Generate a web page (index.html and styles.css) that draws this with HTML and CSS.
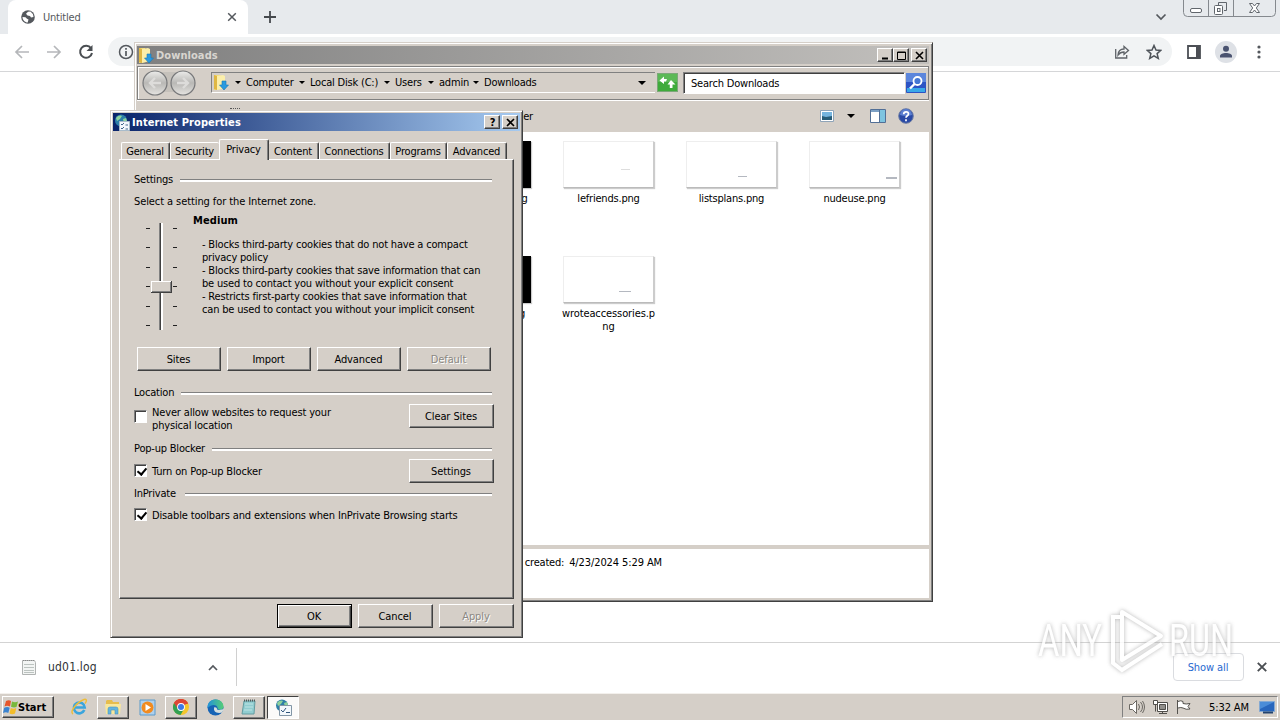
FILE: index.html
```html
<!DOCTYPE html>
<html lang="en">
<head>
    <meta charset="UTF-8">
    <title>Untitled</title>
    <link rel="stylesheet" href="styles.css">
</head>
<body>
    <div class="browser">
        <div class="tab-strip">
            <div class="browser-tab">
                <svg class="tab-globe" width="14" height="14" viewBox="0 0 14 14"><circle cx="7" cy="7" r="6.800" fill="#54585d"/><path d="M1.500 7l3 .3 1.500 1.500 1.500.7-.8 3C4 12.500 1.500 10 1.500 7zM7 1.800l2.500-.2 2.500 2.700.5 2.700-2.500.5-1-1.500-2.500-.5L5 3.700z" fill="#fff"/></svg>
                <span class="tab-title">Untitled</span>
                <svg width="10" height="10" viewBox="0 0 10 10"><path d="M1.200 1.200l7.600 7.600M8.800 1.200L1.200 8.800" stroke="#54585d" stroke-width="1.500"/></svg>
            </div>
            <svg class="new-tab" width="14" height="14" viewBox="0 0 14 14"><path d="M7 1v12M1 7h12" stroke="#45494d" stroke-width="1.800"/></svg>
            <svg class="tab-search" width="12" height="8" viewBox="0 0 12 8"><path d="M1.500 1.500L6 6l4.500-4.500" fill="none" stroke="#54585d" stroke-width="1.700"/></svg>
            <div class="caption-buttons">
                <svg width="93" height="17" viewBox="0 0 93 17" fill="none" stroke="#61666c"><path d="M.5 0v12.500q0 4 4 4h84q4 0 4-4V0M25.500 0v16M50.500 0v16" stroke="#85898e"/><rect x="7.500" y="8.500" width="11" height="4" rx="1.500" fill="#fff"/><path d="M35.500 5V2.500h8v8H41" /><rect x="31.500" y="5.500" width="8" height="9" rx="1" fill="#fff"/><rect x="34.500" y="8.500" width="2.500" height="3"/><path d="M66.500 3.500h3l2 2.500 2-2.500h3l-3.200 4.500 3.200 4.500h-3l-2-2.500-2 2.500h-3L69.700 8z" fill="#fff"/></svg>
            </div>
        </div>
        <div class="toolbar">
            <svg width="16" height="14" viewBox="0 0 16 14" fill="none" stroke="#b5b7ba" stroke-width="1.700"><path d="M15 7H2M8 1L2 7l6 6"/></svg>
            <svg width="16" height="14" viewBox="0 0 16 14" fill="none" stroke="#b5b7ba" stroke-width="1.700"><path d="M1 7h13M8 1l6 6-6 6"/></svg>
            <svg width="16" height="16" viewBox="0 0 16 16"><path d="M13 4.200A6 6 0 1 0 14 9" fill="none" stroke="#4a4e52" stroke-width="2"/><path d="M14.500 1v6h-6z" fill="#4a4e52"/></svg>
            <div class="omnibox">
                <svg width="16" height="16" viewBox="0 0 16 16"><circle cx="8" cy="8" r="6.500" fill="none" stroke="#54585d" stroke-width="1.500"/><path d="M8 7v5M8 4v1.700" stroke="#54585d" stroke-width="1.700"/></svg>
                <span class="grow"></span>
                <svg width="16" height="16" viewBox="0 0 16 16" fill="none" stroke="#5f6368" stroke-width="1.300"><path d="M1.700 5v9h11v-3"/><path d="M4 11c.3-4 2.500-6 6-6V2.500l4.500 4L10 10.300V8C7.500 8 5.500 9 4 11z"/></svg>
                <svg width="16" height="16" viewBox="0 0 16 16"><path d="M8 1.500l2 4.500 4.800.4-3.700 3.200 1.200 4.800L8 11.900l-4.300 2.500 1.200-4.800L1.200 6.400 6 6z" fill="none" stroke="#4e5359" stroke-width="1.500"/></svg>
            </div>
            <svg class="side-panel" width="14" height="14" viewBox="0 0 14 14"><path d="M1 1h12v12H1z" fill="#fff" stroke="#4c4f55" stroke-width="1.800"/><path d="M9 1h4v12H9z" fill="#4c4f55"/></svg>
            <svg class="profile" width="22" height="22" viewBox="0 0 22 22"><circle cx="11" cy="11" r="11" fill="#dee1e6"/><circle cx="11" cy="7.800" r="3" fill="#4a5370"/><path d="M5 16.500v-1.500c0-2 3-3 6-3s6 1 6 3v1.500z" fill="#4a5370"/></svg>
            <svg class="menu-dots" width="4" height="14" viewBox="0 0 4 14" fill="#54585d"><circle cx="2" cy="2" r="1.600"/><circle cx="2" cy="7" r="1.600"/><circle cx="2" cy="12" r="1.600"/></svg>
        </div>
        <div class="page"></div>
        <div class="shelf">
            <div class="download">
                <svg width="14" height="17" viewBox="0 0 14 17"><path d="M.5 1.500h12l1 2v12H.5z" fill="#f3f5f4" stroke="#b0b3b2"/><path d="M2 5.500h10M2 8.500h10M2 11.500h10M2 13.500h10" stroke="#bcc3c0"/><path d="M1 1.500h12" stroke="#888" stroke-dasharray="1 1"/></svg>
                <span class="download-name">ud01.log</span>
                <svg width="10" height="7" viewBox="0 0 10 7"><path d="M1 6l4-4 4 4" fill="none" stroke="#54585d" stroke-width="1.700"/></svg>
            </div>
            <button class="show-all">Show all</button>
            <svg width="10" height="10" viewBox="0 0 10 10"><path d="M.8.8l8.400 8.400M9.200.8L.8 9.200" stroke="#4a4e52" stroke-width="1.900"/></svg>
        </div>
    </div>

    <!-- Explorer -->
    <div class="window explorer">
        <div class="title-bar inactive">
            <svg width="16" height="17" viewBox="0 0 16 17"><path d="M1 1h6l1 2v12l-7 1z" fill="#f5dc78"/><path d="M4 2l6-1 2 1v12l-8 2z" fill="#fbeeaa"/><path d="M1 1l3 1v14l-3-1z" fill="#dfb743"/><path d="M9 7h4v4h2.500L11 16l-4.500-5H9z" fill="#2a9ae0" stroke="#1678b8" stroke-width=".6"/></svg>
            <span class="title">Downloads</span>
            <div class="win-btn"><svg width="10" height="9" viewBox="0 0 10 9"><path d="M1 7.500h6" stroke="#000" stroke-width="2"/></svg></div>
            <div class="win-btn"><svg width="10" height="9" viewBox="0 0 10 9"><path d="M.5 1h8v7.500h-8zM.5 1.500h8" fill="none" stroke="#000"/></svg></div>
            <div class="win-btn close"><svg width="10" height="9" viewBox="0 0 10 9"><path d="M1 1l7 7M8 1L1 8" stroke="#000" stroke-width="1.600"/></svg></div>
        </div>
        <div class="address-row">
            <svg class="nav-buttons" width="56" height="28" viewBox="0 0 56 28">
                <defs><linearGradient id="nav" x1="0" y1="0" x2="0" y2="1"><stop offset="0" stop-color="#ececea"/><stop offset=".5" stop-color="#b9b8b5"/><stop offset="1" stop-color="#e5e4e1"/></linearGradient></defs>
                <path d="M14 3h28v20H14z" fill="#c5c1bb"/>
                <circle cx="14" cy="14" r="12" fill="url(#nav)" stroke="#77787a" stroke-width="1.200"/><circle cx="42" cy="14" r="12" fill="url(#nav)" stroke="#77787a" stroke-width="1.200"/>
                <path d="M20 14H9M14 9l-5 5 5 5M36 14h11M42 9l5 5-5 5" fill="none" stroke="#dddcda" stroke-width="2.400"/>
            </svg>
            <div class="breadcrumbs">
                <svg class="folder" width="16" height="17" viewBox="0 0 16 17"><path d="M1 1h6l1 2v12l-7 1z" fill="#f5dc78"/><path d="M4 2l6-1 2 1v12l-8 2z" fill="#fbeeaa"/><path d="M1 1l3 1v14l-3-1z" fill="#dfb743"/><path d="M9 7h4v4h2.500L11 16l-4.500-5H9z" fill="#2a9ae0" stroke="#1678b8" stroke-width=".6"/></svg>
                <i class="arrow"></i><span class="crumb computer">Computer</span>
                <i class="arrow"></i><span class="crumb disk">Local Disk (C:)</span>
                <i class="arrow"></i><span class="crumb users">Users</span>
                <i class="arrow"></i><span class="crumb admin">admin</span>
                <i class="arrow"></i><span class="crumb">Downloads</span>
                <span class="grow"></span>
                <i class="arrow big"></i>
            </div>
            <svg class="refresh" width="21" height="19" viewBox="0 0 21 19"><rect x=".5" y=".5" width="20" height="18" fill="#3fab3b" stroke="#7ba878"/><path d="M1 1h19v8H1z" fill="#5cb956"/><path d="M2.500 7.500L7 3.500V6h3l-1 2.500H7V11zM18.500 11.500L14 7l-3.500 4.500h2.300V15h2.700v-3.500z" fill="#fff"/></svg>
            <div class="search">Search Downloads</div>
            <svg class="search-go" width="20" height="20" viewBox="0 0 20 20"><rect width="20" height="20" rx="1" fill="#2c53c4"/><path d="M0 0h20v9H0z" fill="#5c86dc"/><path d="M1 19v-4h18v4z" fill="#39a8e8"/><circle cx="11.500" cy="8" r="4" fill="#4577d4" stroke="#fff" stroke-width="1.800"/><path d="M8.500 11L4 15.500" stroke="#fff" stroke-width="2.400"/></svg>
        </div>
        <div class="command-bar">
            <span class="hidden-edge"></span>
            <span class="new-folder">New folder</span>
            <span class="grow"></span>
            <svg width="14" height="12" viewBox="0 0 14 12"><path d="M.5.500h13v11H.5z" fill="#fff" stroke="#8fa4b8"/><path d="M2 2h10v8H2z" fill="#76b5df"/><path d="M2 6l4 1 6-1v4H2z" fill="#285d78"/></svg>
            <i class="arrow big view-arrow"></i>
            <svg class="preview" width="16" height="14" viewBox="0 0 16 14"><path d="M.5.500h15v13H.5z" fill="#fff" stroke="#526f96"/><path d="M1 2h9" stroke="#7ca0c4" stroke-width="2"/><path d="M10 1h5v12h-5z" fill="#7ec4e0"/><path d="M9.500 1v12" stroke="#526f96"/></svg>
            <svg width="16" height="16" viewBox="0 0 16 16"><circle cx="8" cy="8" r="7.300" fill="#2949a5" stroke="#6d7da4"/><path d="M2 7a6 6 0 0 1 12 0q-6 2-12 0z" fill="#5c7fd0"/><path d="M5.700 6.300c0-3.300 4.800-3 4.800-.3C10.500 7.800 8 7.800 8 9.800M8 11.200v2" fill="none" stroke="#fff" stroke-width="1.700"/></svg>
        </div>
        <div class="files">
            <div class="file"><div class="thumb dark"></div><span class="tail">.png</span></div>
            <div class="file"><div class="thumb"><i class="speck one"></i></div><span>lefriends.png</span></div>
            <div class="file"><div class="thumb"><i class="speck two"></i></div><span>listsplans.png</span></div>
            <div class="file"><div class="thumb"><i class="speck three"></i></div><span>nudeuse.png</span></div>
            <div class="file"><div class="thumb dark"></div><span class="tail short">.png</span></div>
            <div class="file"><div class="thumb"><i class="speck four"></i></div><span class="wide">wroteaccessories.p<br>ng</span></div>
        </div>
        <div class="details">Date created: <span class="date">4/23/2024 5:29 AM</span></div>
    </div>

    <!-- Internet Properties -->
    <div class="window dialog">
        <div class="title-bar active">
            <svg width="17" height="17" viewBox="0 0 17 17"><circle cx="7" cy="6.500" r="6" fill="#2e7fa8"/><path d="M2 4c2-3 5-3 6-2L6 5 3 7zM9 5l3-1 1 3-3 3z" fill="#8ed29b"/><path d="M5.500 7.500h10v9h-10z" fill="#f3f8fc" stroke="#a9bccb"/><path d="M7 10l1 1 2-2M7 14l1 1 2-2M11.500 11H14M11.500 15H14" fill="none" stroke="#42688c"/></svg>
            <span class="title">Internet Properties</span>
            <div class="win-btn help">?</div>
            <div class="win-btn close"><svg width="10" height="9" viewBox="0 0 10 9"><path d="M1 1l7 7M8 1L1 8" stroke="#000" stroke-width="1.600"/></svg></div>
        </div>
        <div class="tabs">
            <div class="tab general">General</div>
            <div class="tab security">Security</div>
            <div class="tab privacy">Privacy</div>
            <div class="tab content">Content</div>
            <div class="tab connections">Connections</div>
            <div class="tab programs">Programs</div>
            <div class="tab advanced">Advanced</div>
        </div>
        <div class="panel">
            <div class="group">Settings</div>
            <p class="intro">Select a setting for the Internet zone.</p>
            <div class="zone">
                <svg class="slider" width="33" height="110" viewBox="0 0 33 110" shape-rendering="crispEdges">
                    <path d="M1 7.500h4M1 26.500h4M1 46.500h4M1 65.500h4M1 85.500h4M1 104.500h4M28 7.500h4M28 26.500h4M28 46.500h4M28 65.500h4M28 85.500h4M28 104.500h4" stroke="#222"/>
                    <path d="M14 2h1v107h-1z" fill="#808080"/><path d="M15 2h1v107h-1z" fill="#404040"/><path d="M16 2h2v107h-2z" fill="#fff"/>
                    <path d="M6 60h21v12H6z" fill="#404040"/><path d="M6 60h20v11H6z" fill="#fff"/><path d="M7 61h19v10H7z" fill="#808080"/><path d="M7 61h18v9H7z" fill="#d5cfc8"/>
                </svg>
                <div class="level">
                    <strong>Medium</strong>
                    <p>- Blocks third-party cookies that do not have a compact<br>privacy policy<br>
                    - Blocks third-party cookies that save information that can<br>be used to contact you without your explicit consent<br>
                    - Restricts first-party cookies that save information that<br>can be used to contact you without your implicit consent</p>
                </div>
            </div>
            <div class="zone-buttons">
                <button>Sites</button>
                <button>Import</button>
                <button>Advanced</button>
                <button disabled>Default</button>
            </div>
            <div class="group">Location</div>
            <div class="option location">
                <span class="check"></span>
                <label>Never allow websites to request your<br>physical location</label>
                <button>Clear Sites</button>
            </div>
            <div class="group popup">Pop-up Blocker</div>
            <div class="option">
                <span class="check on"></span>
                <label class="popup-label">Turn on Pop-up Blocker</label>
                <button>Settings</button>
            </div>
            <div class="group private">InPrivate</div>
            <div class="option inprivate">
                <span class="check on"></span>
                <label>Disable toolbars and extensions when InPrivate Browsing starts</label>
            </div>
        </div>
        <div class="dialog-buttons">
            <button class="default">OK</button>
            <button>Cancel</button>
            <button disabled>Apply</button>
        </div>
    </div>

    <div class="taskbar">
        <div class="start">
            <svg width="17" height="16" viewBox="0 0 17 16"><path d="M3 2q3-1.500 5 0L7 7.500q-3-1.500-5.500 0z" fill="#e6562b"/><path d="M9 2.500q3 1.500 6 0L13.500 8Q11 9 8 7.800z" fill="#79b83c"/><path d="M1.200 8.700q3-1.500 5.500 0L5.300 14Q3 12.500 0 14z" fill="#3a83d0"/><path d="M7.800 9q2.500 1.500 5.500 0L12 14.500q-3 1.500-5.500 0z" fill="#f3bd2b"/></svg>
            Start
        </div>
        <div class="task ie"><svg width="18" height="18" viewBox="0 0 18 18"><path d="M14.300 12A5.400 5.400 0 1 1 14.700 9.500H4.500" fill="none" stroke="#3aa5dd" stroke-width="2.600"/><path d="M3 16C-1 14 7 4 14 1.500c3.500-.8 2.500 2 1 4" fill="none" stroke="#edbd3a" stroke-width="1.500"/></svg></div>
        <div class="task raised"><svg width="18" height="18" viewBox="0 0 18 18"><path d="M2 3l1-1h5l1 2h6v11H2z" fill="#e6bd4c"/><path d="M1 6h16l-1 10H2z" fill="#f8e79b"/><path d="M4 16v-5q0-2 2-2h6q2 0 2 2v5h-3v-4H7v4z" fill="#62b4df" stroke="#4994bd" stroke-width=".6"/></svg></div>
        <div class="task"><svg width="17" height="17" viewBox="0 0 17 17"><path d="M1 1h15v15H1z" fill="#afd0ec" stroke="#5b9acb"/><circle cx="8.500" cy="8.500" r="6" fill="#f18b20"/><path d="M6.500 5v7l5.500-3.500z" fill="#fff"/></svg></div>
        <div class="task raised"><svg width="16" height="16" viewBox="0 0 16 16"><circle cx="8" cy="8" r="8" fill="#f4c62b"/><path d="M8 8L1 4a8 8 0 0 1 14 0z" fill="#dc4636"/><path d="M1 4a8 8 0 0 0 6.500 12L11 10 8 8z" fill="#32a052"/><path d="M1 4l4 6 3-5h7A8 8 0 0 0 1 4z" fill="#dc4636"/><circle cx="8" cy="8" r="3.900" fill="#fff"/><circle cx="8" cy="8" r="3" fill="#3c79e6"/></svg></div>
        <div class="task"><svg width="17" height="17" viewBox="0 0 17 17"><defs><linearGradient id="edge" x1="0" x2="1"><stop offset="0" stop-color="#2292da"/><stop offset="1" stop-color="#55ce76"/></linearGradient></defs><circle cx="8.500" cy="8.500" r="8" fill="#1764b5"/><path d="M.5 9C0-2 16-2 16.500 7.500c0 4-6 4-6 1.500C11 6 5 4 .5 9z" fill="url(#edge)"/><path d="M7.500 8c-2 4 2 7 7.500 5.500L17 10l-5 1q-3-.5-2-2z" fill="#d6dfdf"/></svg></div>
        <div class="task raised"><svg width="16" height="17" viewBox="0 0 16 17"><path d="M3 2h11l-1 13H1z" fill="#91cdd0" stroke="#649ca1"/><path d="M4 5h8M4 8h8M3 11h8" stroke="#bfe4e4"/><path d="M3 1.500h12" stroke="#505b5c" stroke-width="2" stroke-dasharray="1 1"/></svg></div>
        <div class="task pressed"><svg width="17" height="17" viewBox="0 0 17 17"><circle cx="7" cy="6.500" r="6" fill="#2e7fa8"/><path d="M2 4c2-3 5-3 6-2L6 5 3 7zM9 4l3-1 1 3-3 2z" fill="#8ed29b"/><path d="M4.500 6.500h12v10h-12z" fill="#f3f8fc" stroke="#8296a6"/><path d="M6 11l2 2 3-4M11 13.500h4" fill="none" stroke="#31567c"/></svg></div>
        <div class="tray">
            <svg width="18" height="16" viewBox="0 0 18 16" fill="none" stroke="#6b6863"><path d="M1.500 5.500h3l4-4v13l-4-4h-3z" fill="#fff"/><path d="M10.500 5q2 3 0 6M12.500 3q4 5 0 10M14.500 2q4 6 0 12"/></svg>
            <svg width="17" height="16" viewBox="0 0 17 16" fill="none" stroke="#504e4a"><path d="M5.500 3.500h10v9h-10z" fill="#fff"/><path d="M7.500 5.500h6v5h-6z" fill="#918f8b"/><path d="M1.500 1.500h4v4h-4z" fill="#fff"/><path d="M3.500 5.500v7M7 14.500h8M10.500 12v2"/></svg>
            <svg width="17" height="16" viewBox="0 0 17 16"><path d="M2.500 1v14M3 2.500q3-1.500 5 0v2q3 1 7 0l-2 3 2 2.500q-4 1-7-1-2-1-5 0" fill="#fff" stroke="#55534f"/></svg>
            <span class="clock">5:32 AM</span>
            <svg width="16" height="14" viewBox="0 0 16 14"><path d="M.5 1.500h15v10H.5z" fill="#2866bd" stroke="#84a9d3"/><path d="M1 2h14L1 9z" fill="#4a8cd8"/><path d="M4 12.500h10" stroke="#23436f" stroke-width="2"/></svg>
        </div>
    </div>

    <svg class="watermark" width="210" height="70" viewBox="0 0 210 70">
        <g fill="#fff">
            <text x="8" y="52" textLength="64" lengthAdjust="spacingAndGlyphs">ANY</text>
            <text x="139" y="52" textLength="64" lengthAdjust="spacingAndGlyphs">RUN</text>
        </g>
        <path d="M92 8L131 32 92 56z" fill="none" stroke="#fff" stroke-width="4" stroke-linejoin="round"/>
        <path d="M90 13h-7v46l9 7 40-26" fill="none" stroke="#fff" stroke-width="4"/>
    </svg>
</body>
</html>
```

FILE: styles.css
```css
:root {
    --face: #d5cfc8;
    --dark: #404040;
    --shade: #808080;
}

* {
    box-sizing: border-box;
}

body {
    position: relative;
    width: 1280px;
    height: 720px;
    margin: 0;
    overflow: hidden;
    background: #fff;
    color: #000;
    font: 11px/13px "DejaVu Sans Condensed", "DejaVu Sans", sans-serif;
    letter-spacing: -0.2px;
    white-space: nowrap;
}

svg {
    display: block;
    flex: none;
}

p {
    margin: 0;
}

.grow {
    flex: 1;
}

/* Browser */
.browser {
    display: flex;
    flex-direction: column;
    height: 693px;
}

.tab-strip {
    display: flex;
    height: 34px;
    padding-left: 8px;
    background: #e7eaed;
}

.browser-tab {
    display: flex;
    align-items: center;
    width: 240px;
    padding: 0 11px 0 13px;
    border-radius: 8px 8px 0 0;
    background: #fff;
}

.tab-title {
    flex: 1;
    margin-left: 8px;
    color: #55585c;
}

.new-tab {
    margin: 10px 0 0 15px;
}

.tab-search {
    margin: 13px 16px 0 auto;
}

.caption-buttons {
    width: 97px;
}

.toolbar {
    display: flex;
    align-items: center;
    height: 38px;
    padding: 0 0 2px 14px;
    gap: 16px;
    border-bottom: 1px solid #d5d6d8;
}

.omnibox {
    display: flex;
    align-items: center;
    width: 1064px;
    height: 29px;
    margin-left: -2px;
    padding: 0 10px;
    gap: 16px;
    border-radius: 15px;
    background: #f1f3f4;
}

.side-panel {
    margin-left: -1px;
}

.profile {
    margin-left: -2px;
}

.menu-dots {
    margin-left: 4px;
}

.page {
    flex: 1;
}

.shelf {
    display: flex;
    align-items: center;
    height: 51px;
    padding: 0 13px 2px 0;
    border-top: 1px solid #d3d3d3;
}

.download {
    display: flex;
    align-items: center;
    width: 237px;
    height: 38px;
    padding: 0 18px 0 22px;
    border-right: 1px solid #d0d0d0;
}

.download-name {
    flex: 1;
    margin-left: 12px;
    color: #303336;
    font-size: 12px;
    letter-spacing: 0.2px;
}

.shelf .show-all {
    width: 71px;
    height: 28px;
    margin: 0 13px 0 auto;
    border: 1px solid #dadce0;
    border-radius: 4px;
    box-shadow: none;
    background: #fff;
    color: #2769cf;
}

/* Windows */
.window {
    position: absolute;
    display: flex;
    flex-direction: column;
    border: 1px solid;
    border-color: var(--face) var(--dark) var(--dark) var(--face);
    box-shadow: inset 1px 1px #fff, inset -1px -1px var(--shade);
    background: var(--face);
}

.explorer {
    left: 134px;
    top: 42px;
    width: 799px;
    height: 560px;
    padding: 3px 3px 3px 2px;
}

.dialog {
    left: 110px;
    top: 110px;
    width: 413px;
    height: 528px;
    padding: 2px;
}

.title-bar {
    display: flex;
    align-items: center;
    flex: none;
    height: 18px;
    padding-left: 1px;
    padding-right: 2px;
}

.title-bar.inactive {
    background: linear-gradient(90deg, #808080, #c2c0bd);
    color: #d8d5d0;
}

.title-bar.active {
    background: linear-gradient(90deg, #0a246a, #a6caf0);
    color: #fff;
}

.title {
    flex: 1;
    margin-left: 2px;
    font-weight: bold;
    letter-spacing: 0.08px;
}

.active .title {
    margin-left: 1px;
}

.win-btn {
    display: flex;
    align-items: center;
    justify-content: center;
    width: 16px;
    height: 14px;
    padding-left: 1px;
    border: 1px solid;
    border-color: #fff var(--dark) var(--dark) #fff;
    box-shadow: inset -1px -1px var(--shade);
    background: var(--face);
    color: #000;
    font-weight: bold;
}

.win-btn.close {
    margin-left: 2px;
}

button {
    width: 84px;
    height: 24px;
    padding: 0 1px 0 0;
    border: 1px solid;
    border-color: #fff var(--dark) var(--dark) #fff;
    box-shadow: inset -1px -1px var(--shade);
    background: var(--face);
    color: #000;
    font: inherit;
    letter-spacing: -0.1px;
}

button:disabled {
    color: #8b8883;
    text-shadow: 1px 1px #fff;
}

button.default {
    border-color: #000;
    box-shadow: inset 1px 1px #fff, inset -1px -1px var(--dark), inset -2px -2px var(--shade);
}

.arrow {
    width: 0;
    height: 0;
    border: 3px solid transparent;
    border-top-color: #000;
    border-bottom: 0;
}

.arrow.big {
    border-width: 4px;
    border-bottom: 0;
}

/* Explorer */
.address-row {
    display: flex;
    align-items: center;
    flex: none;
    height: 34px;
    margin-top: 2px;
    padding: 0 0 1px 3px;
    border: 1px solid var(--shade);
    box-shadow: inset 1px 1px #fff, 0 1px #fff;
}

.breadcrumbs {
    display: flex;
    align-items: center;
    width: 444px;
    height: 21px;
    margin-left: 14px;
    padding-right: 9px;
    border: 1px solid var(--shade);
    border-right: 0;
    border-bottom-color: #fff;
}

.breadcrumbs .folder {
    margin: 0 6px 0 1px;
}

.crumb {
    margin: -1px 0 0 5px;
}

.crumb.computer {
    width: 53px;
}

.crumb.disk {
    width: 74px;
}

.crumb.users {
    width: 33px;
}

.crumb.admin {
    width: 34px;
}

.refresh {
    margin-left: 2px;
}

.search {
    width: 222px;
    height: 22px;
    margin-left: 5px;
    padding: 4px 7px;
    border: 1px solid;
    border-color: var(--shade) #fff #fff var(--shade);
    box-shadow: inset 1px 1px var(--dark);
    background: #fff;
}

.search-go {
    margin-left: 1px;
}

.command-bar {
    display: flex;
    align-items: center;
    flex: none;
    height: 32px;
    padding-right: 15px;
}

.hidden-edge {
    align-self: flex-start;
    width: 10px;
    height: 2px;
    margin: 8px 0 0 93px;
    border-top: 1px dotted #555;
}

.new-folder {
    width: 300px;
    margin-left: -7px;
    text-align: right;
}

.view-arrow {
    margin: 0 15px 0 13px;
}

.preview {
    margin-right: 12px;
}

.files {
    display: grid;
    grid-template-columns: repeat(4, 123px);
    grid-auto-rows: 115px;
    flex: none;
    height: 413px;
    padding: 9px 0 0 287px;
    background: #fff;
}

.file {
    display: flex;
    flex-direction: column;
    align-items: center;
    text-align: center;
}

.thumb {
    display: flex;
    width: 91px;
    height: 47px;
    margin: 0 1px 4px 0;
    border: 1px solid #eee;
    border-right-color: #ccc;
    border-bottom-color: #bbb;
    box-shadow: 1px 1px 1px #ccc;
}

.thumb.dark {
    border-color: #000;
    background: #000;
}

.tail {
    width: 84px;
    text-align: right;
}

.tail.short {
    width: 79px;
}

.wide {
    letter-spacing: -0.1px;
}

.speck {
    width: 9px;
    height: 1px;
    background: #b4b8c0;
}

.speck.one {
    margin: 27px 0 0 57px;
    background: #ddd;
}

.speck.two {
    margin: 34px 0 0 51px;
}

.speck.three {
    width: 11px;
    height: 2px;
    margin: 35px 0 0 76px;
}

.speck.four {
    width: 12px;
    margin: 34px 0 0 55px;
}

.details {
    flex: 1;
    margin: 4px 0 0;
    padding: 7px 0 0 362px;
    background: #fff;
}

.date {
    margin-left: 2px;
    letter-spacing: -0.1px;
}

/* Internet Properties */
.tabs {
    display: flex;
    align-items: flex-end;
    flex: none;
    height: 28px;
    padding-left: 8px;
}

.tab {
    height: 17px;
    padding: 2px 1px 0 0;
    border: 1px solid #fff;
    border-right: 1px solid var(--dark);
    border-bottom: 0;
    border-radius: 2px 2px 0 0;
    box-shadow: inset -1px 0 var(--shade);
    text-align: center;
}

.tab.general {
    width: 49px;
}

.tab.security {
    width: 49px;
    border-right: 0;
    box-shadow: none;
}

.tab.privacy {
    z-index: 1;
    width: 50px;
    height: 21px;
    margin-bottom: -1px;
    padding-top: 3px;
    background: var(--face);
}

.tab.content {
    width: 50px;
    border-left: 0;
}

.tab.connections {
    width: 71px;
}

.tab.programs {
    width: 57px;
}

.tab.advanced {
    width: 60px;
}

.panel {
    flex: none;
    width: 395px;
    height: 440px;
    margin-left: 6px;
    padding: 13px 21px 0 14px;
    border: 1px solid;
    border-color: #fff var(--dark) var(--dark) #fff;
    box-shadow: inset -1px -1px var(--shade);
}

.group {
    display: flex;
    align-items: center;
    height: 13px;
}

.group::after {
    flex: 1;
    height: 2px;
    margin: 2px 0 0 7px;
    border-top: 1px solid var(--shade);
    background: #fff;
    content: "";
}

.intro {
    margin-top: 9px;
    letter-spacing: -0.09px;
}

.zone {
    display: flex;
    margin-top: 6px;
    height: 133px;
}

.slider {
    margin: 7px 0 0 11px;
}

.level {
    margin-left: 15px;
}

.level strong {
    letter-spacing: 0.1px;
}

.level p {
    margin: 11px 0 0 9px;
    letter-spacing: -0.18px;
}

.zone-buttons {
    display: flex;
    gap: 6px;
    margin: 0 -2px 15px 3px;
}

.option {
    display: flex;
    align-items: center;
    height: 24px;
    margin-right: -2px;
}

.option label {
    letter-spacing: -0.15px;
}

.option button {
    width: 85px;
    margin-left: auto;
}

.option.location {
    height: 28px;
    margin: 4px -2px 11px 0;
}

.option.location label {
    padding-top: 3px;
}

.option.location button {
    margin-bottom: 2px;
}

.option.inprivate {
    margin-top: 3px;
}

.group.popup {
    margin-bottom: 4px;
}

.group.private {
    margin-top: 4px;
}

.group.private::after {
    margin-left: 9px;
}

.check {
    position: relative;
    width: 13px;
    height: 13px;
    margin: 0 5px 1px 0;
    border: 1px solid;
    border-color: var(--shade) #fff #fff var(--shade);
    box-shadow: inset 1px 1px var(--dark);
    background: #fff;
}

.check.on::after {
    position: absolute;
    left: 4px;
    top: 1px;
    width: 4px;
    height: 7px;
    border: solid #000;
    border-width: 0 2px 2px 0;
    transform: rotate(40deg);
    content: "";
}

.dialog-buttons {
    display: flex;
    justify-content: flex-end;
    gap: 6px;
    margin-top: 5px;
    padding-right: 6px;
}

.dialog-buttons button {
    width: 75px;
}

/* Taskbar */
.taskbar {
    display: flex;
    align-items: center;
    height: 27px;
    padding: 0 2px;
    border-top: 1px solid #f3f0ec;
    background: var(--face);
}

.start,
.task.raised {
    border: 1px solid;
    border-color: #fff var(--dark) var(--dark) #fff;
    box-shadow: inset -1px -1px var(--shade);
}

.start {
    display: flex;
    align-items: center;
    width: 52px;
    height: 22px;
    margin-right: 9px;
    font-weight: bold;
    letter-spacing: 0;
}

.start svg {
    margin-right: -2px;
}

.task {
    display: flex;
    align-items: center;
    justify-content: center;
    width: 32px;
    height: 23px;
    margin-right: 2px;
}

.task.pressed {
    border: 1px solid;
    border-color: var(--dark) #fff #fff var(--dark);
    background: #fbfaf9;
}

.tray {
    display: flex;
    align-items: center;
    width: 156px;
    height: 22px;
    margin-left: auto;
    padding-left: 5px;
    gap: 7px;
    border: 1px solid;
    border-color: var(--shade) #fff #fff var(--shade);
}

.tray svg:nth-child(2),
.tray svg:nth-child(3) {
    margin-left: -1px;
}

.clock {
    width: 43px;
    margin-left: 10px;
    letter-spacing: -0.1px;
}

.watermark {
    position: absolute;
    left: 1030px;
    top: 604px;
    opacity: 0.85;
    filter: drop-shadow(0 0 2px #aaa);
    font: 45px/1 Roboto, sans-serif;
    letter-spacing: 0;
}
```
